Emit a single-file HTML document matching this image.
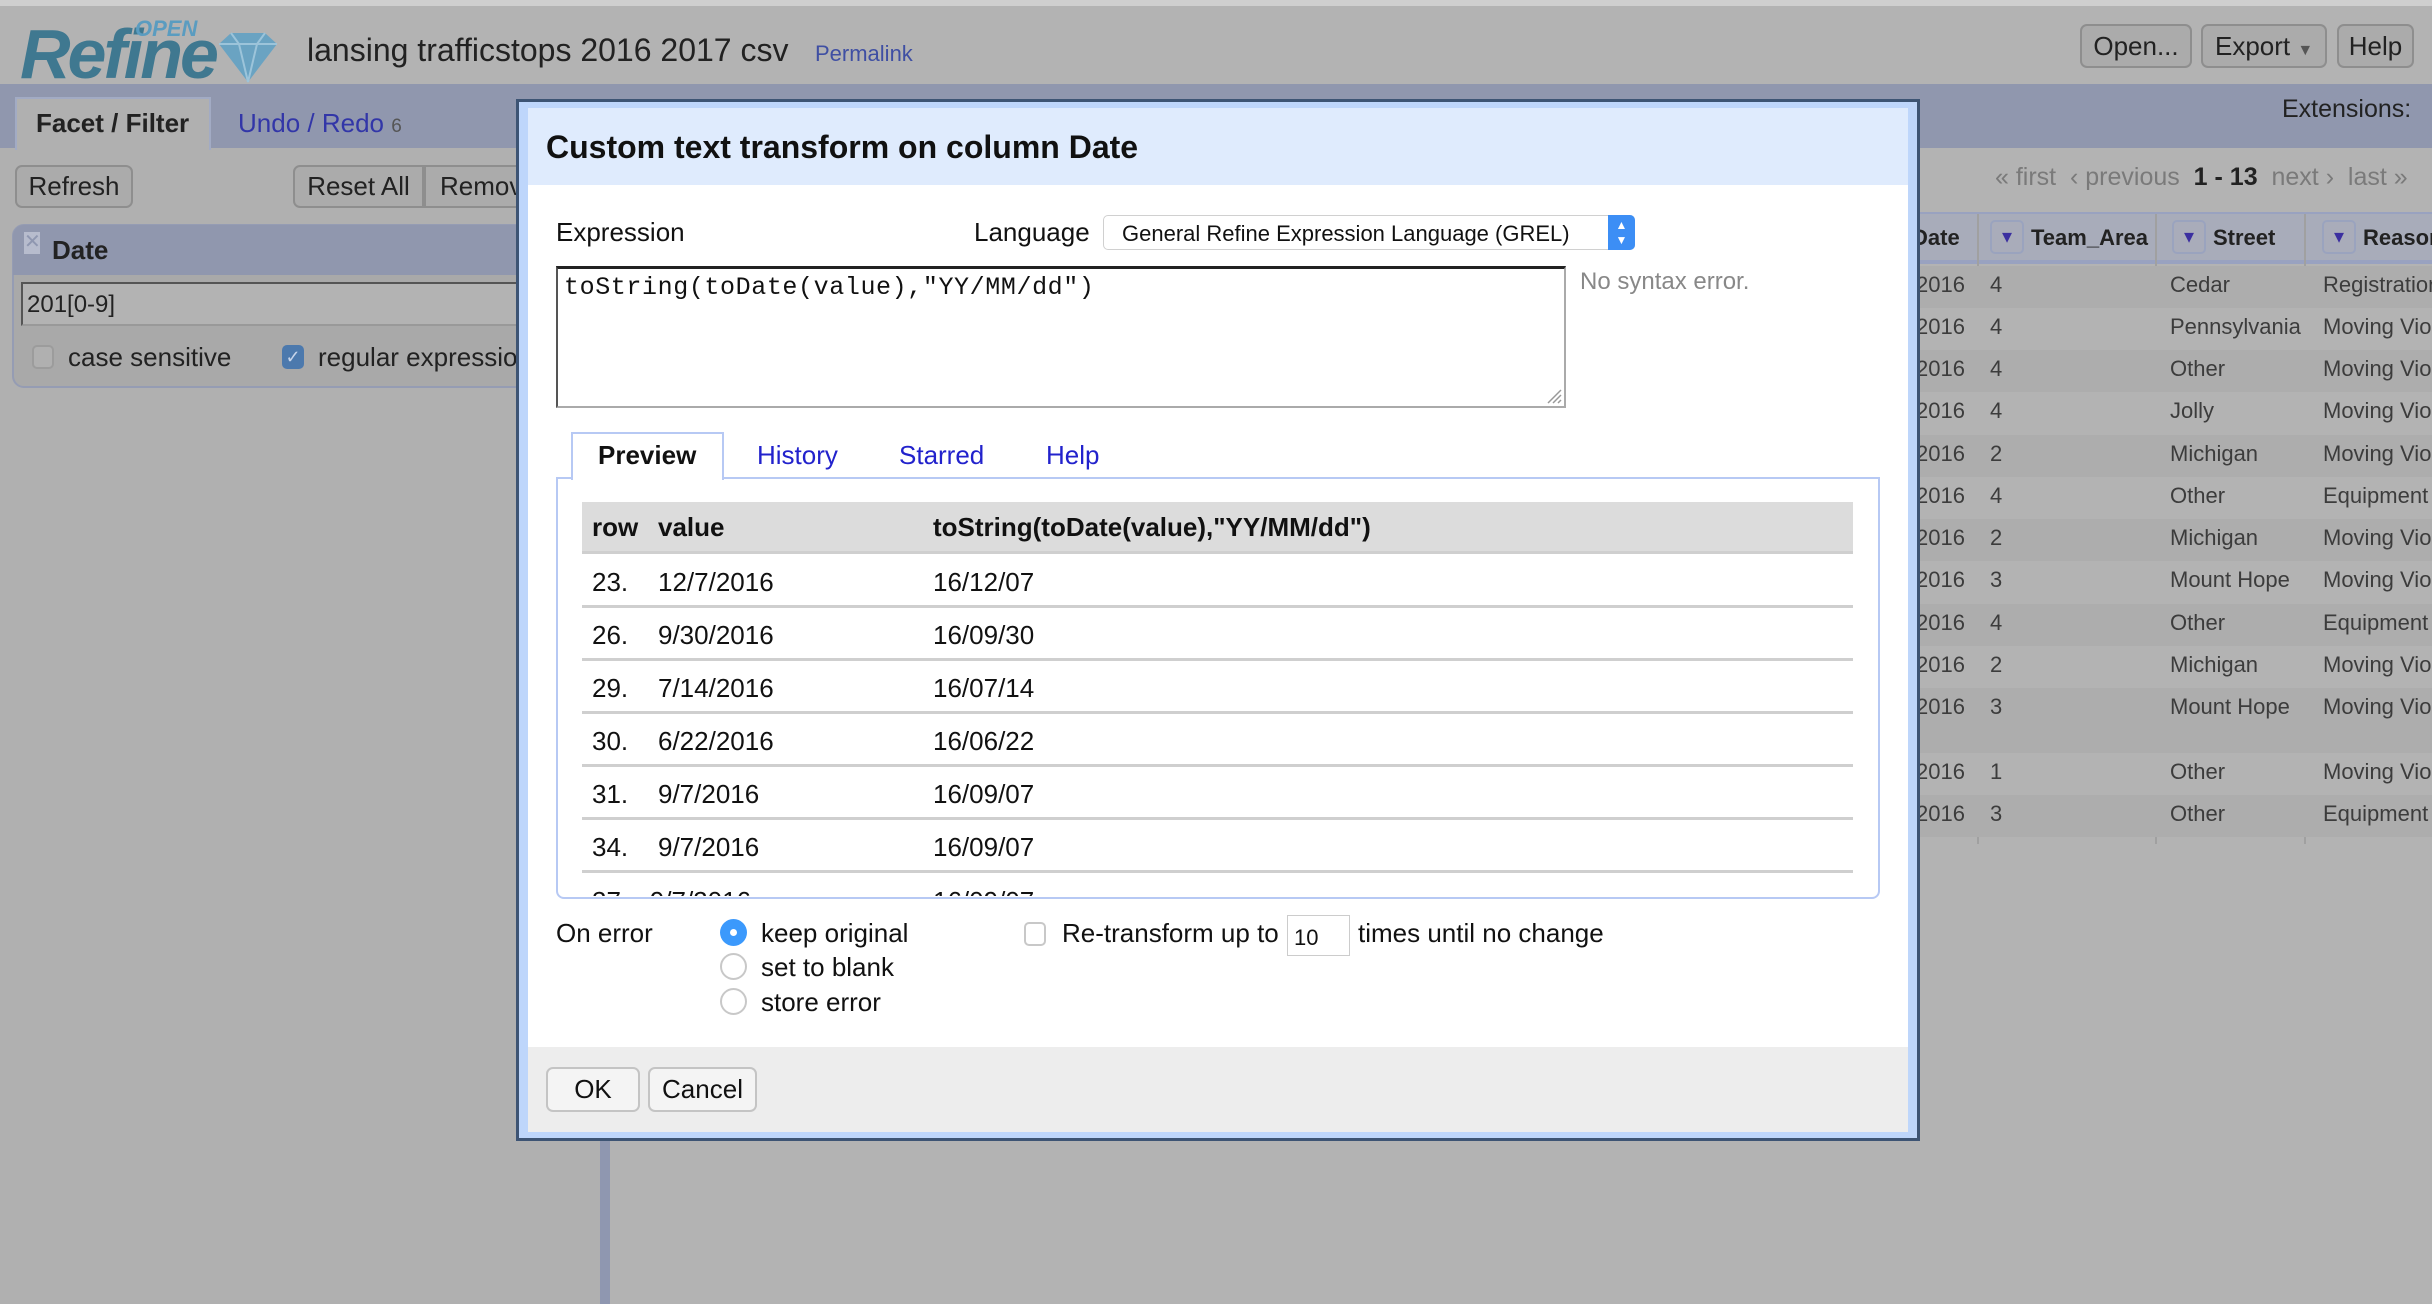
<!DOCTYPE html>
<html><head><meta charset="utf-8"><style>
*{box-sizing:border-box;margin:0;padding:0}
body{width:2432px;height:1304px;position:relative;overflow:hidden;background:#b3b3b3;font-family:"Liberation Sans",Arial,sans-serif;color:#222}
.a{position:absolute;white-space:nowrap}
.btn{position:absolute;border:2px solid #8e8e8e;border-radius:7px;background:#ababab;font-size:26px;color:#222;text-align:center}
.g{position:absolute;font-size:22px;color:#3c3c3c;white-space:nowrap}
.dlg .t{position:absolute;white-space:nowrap;font-size:26px;color:#111}
.row{position:absolute;left:582px;width:1271px;height:53px;border-bottom:3px solid #cfcfcf}
.row span{position:absolute;top:12px;font-size:26px;color:#111}
.radio{position:absolute;width:27px;height:27px;border-radius:50%;border:2px solid #c8c8c8;background:#fff}
.dd{position:absolute;top:220px;width:34px;height:34px;border:2px solid #9aa3be;border-radius:5px;background:#a9acba;color:#3b2fa0;font-size:20px;text-align:center;line-height:30px}
</style></head><body>
<div class="a" style="left:0;top:0;width:2432px;height:6px;background:#cfcfcf"></div>
<div class="a" style="left:0;top:84px;width:2432px;height:64px;background:#9097ae"></div>
<div class="a" style="left:20px;top:14px;font-size:70px;font-style:italic;font-weight:bold;color:#3f7890;letter-spacing:-3px">Refine</div>
<div class="a" style="left:135px;top:16px;font-size:22px;font-style:italic;font-weight:bold;color:#5a9cc0">OPEN</div>
<svg class="a" style="left:215px;top:30px" width="66" height="54" viewBox="0 0 66 54"><path d="M4 14 L16 3 L50 3 L62 14 L33 52 Z" fill="#6aa3c2"/><path d="M4 14 L62 14 M16 3 L24 14 L33 52 L42 14 L50 3" stroke="#9cc4da" stroke-width="2" fill="none"/></svg>
<div class="a" style="left:307px;top:32px;font-size:32px;color:#222">lansing trafficstops 2016 2017 csv</div>
<div class="a" style="left:815px;top:41px;font-size:22px;color:#3f4fa3">Permalink</div>
<div class="btn" style="left:2080px;top:24px;width:112px;height:44px;line-height:40px">Open...</div>
<div class="btn" style="left:2201px;top:24px;width:126px;height:44px;line-height:40px;text-align:left;padding-left:12px">Export <span style="font-size:16px;color:#555">▼</span></div>
<div class="btn" style="left:2337px;top:24px;width:77px;height:44px;line-height:40px">Help</div>
<div class="a" style="left:0;top:148px;width:600px;height:1156px;background:#b0b0b0"></div>
<div class="a" style="left:600px;top:148px;width:10px;height:1156px;background:#8f97b0"></div>
<div class="a" style="left:15px;top:97px;width:196px;height:53px;background:#b0b0b0;border:2px solid #a2abc4;border-bottom:none"></div>
<div class="a" style="left:36px;top:108px;font-size:26px;font-weight:bold;color:#222">Facet / Filter</div>
<div class="a" style="left:238px;top:108px;font-size:26px;color:#3236a8">Undo / Redo <span style="font-size:19px;color:#555">6</span></div>
<div class="btn" style="left:15px;top:165px;width:118px;height:43px;line-height:39px">Refresh</div>
<div class="btn" style="left:293px;top:165px;width:131px;height:43px;line-height:39px;border-radius:7px 0 0 7px">Reset All</div>
<div class="btn" style="left:424px;top:165px;width:130px;height:43px;line-height:39px;text-align:left;padding-left:14px;border-radius:0">Remove</div>
<div class="a" style="left:12px;top:224px;width:560px;height:164px;background:#a9a9a9;border:2px solid #959cb3;border-radius:12px"></div>
<div class="a" style="left:13px;top:225px;width:560px;height:50px;background:#9097ae;border-radius:11px 0 0 0"></div>
<div class="a" style="left:24px;top:232px;width:16px;height:22px;background:#b7bccd;color:#8f97b0;font-size:20px;line-height:20px;text-align:center">✕</div>
<div class="a" style="left:52px;top:235px;font-size:26px;font-weight:bold;color:#222">Date</div>
<div class="a" style="left:21px;top:282px;width:560px;height:44px;background:#b3b3b3;border:2px solid #555;border-right:none;border-bottom:2px solid #999;font-size:24px;padding:7px 4px;color:#222">201[0-9]</div>
<div class="a" style="left:32px;top:345px;width:22px;height:24px;border:2px solid #9c9c9c;border-radius:5px;background:#b0b0b0"></div>
<div class="a" style="left:68px;top:342px;font-size:26px;color:#222">case sensitive</div>
<div class="a" style="left:282px;top:345px;width:22px;height:24px;border-radius:5px;background:#4c79ad;color:#c6d4ea;font-size:18px;text-align:center;line-height:24px">✓</div>
<div class="a" style="left:318px;top:342px;font-size:26px;color:#222">regular expression</div>
<div class="a" style="left:2282px;top:95px;font-size:25px;color:#222">Extensions:</div>
<div class="a" style="left:1995px;top:163px;font-size:25px;color:#7a7a7a">« first &nbsp;‹ previous &nbsp;<b style="color:#222">1 - 13</b> &nbsp;next › &nbsp;last »</div>
<div class="a" style="left:1920px;top:212px;width:512px;height:52px;background:#a8acba;border-top:2px solid #99a2c0;border-bottom:4px solid #99a2c0"></div>
<div class="a" style="left:1977px;top:214px;width:2px;height:630px;background:#a0a0a0"></div>
<div class="a" style="left:2155px;top:214px;width:2px;height:630px;background:#a0a0a0"></div>
<div class="a" style="left:2304px;top:214px;width:2px;height:630px;background:#a0a0a0"></div>
<div class="g" style="left:1912px;top:225px;font-weight:bold;color:#222">Date</div>
<div class="dd" style="left:1990px">▾</div>
<div class="g" style="left:2031px;top:225px;font-weight:bold;color:#222">Team_Area</div>
<div class="dd" style="left:2172px">▾</div>
<div class="g" style="left:2213px;top:225px;font-weight:bold;color:#222">Street</div>
<div class="dd" style="left:2322px">▾</div>
<div class="g" style="left:2363px;top:225px;font-weight:bold;color:#222">Reason</div>
<div class="a" style="left:1920px;top:266px;width:512px;height:42px;background:#adadad"></div><div class="g" style="left:1916px;top:272px">2016</div><div class="g" style="left:1990px;top:272px">4</div><div class="g" style="left:2170px;top:272px">Cedar</div><div class="g" style="left:2323px;top:272px">Registration</div>
<div class="a" style="left:1920px;top:308px;width:512px;height:42px;background:#b3b3b3"></div><div class="g" style="left:1916px;top:314px">2016</div><div class="g" style="left:1990px;top:314px">4</div><div class="g" style="left:2170px;top:314px">Pennsylvania</div><div class="g" style="left:2323px;top:314px">Moving Violation</div>
<div class="a" style="left:1920px;top:350px;width:512px;height:42px;background:#adadad"></div><div class="g" style="left:1916px;top:356px">2016</div><div class="g" style="left:1990px;top:356px">4</div><div class="g" style="left:2170px;top:356px">Other</div><div class="g" style="left:2323px;top:356px">Moving Violation</div>
<div class="a" style="left:1920px;top:392px;width:512px;height:43px;background:#b3b3b3"></div><div class="g" style="left:1916px;top:398px">2016</div><div class="g" style="left:1990px;top:398px">4</div><div class="g" style="left:2170px;top:398px">Jolly</div><div class="g" style="left:2323px;top:398px">Moving Violation</div>
<div class="a" style="left:1920px;top:435px;width:512px;height:42px;background:#adadad"></div><div class="g" style="left:1916px;top:441px">2016</div><div class="g" style="left:1990px;top:441px">2</div><div class="g" style="left:2170px;top:441px">Michigan</div><div class="g" style="left:2323px;top:441px">Moving Violation</div>
<div class="a" style="left:1920px;top:477px;width:512px;height:42px;background:#b3b3b3"></div><div class="g" style="left:1916px;top:483px">2016</div><div class="g" style="left:1990px;top:483px">4</div><div class="g" style="left:2170px;top:483px">Other</div><div class="g" style="left:2323px;top:483px">Equipment</div>
<div class="a" style="left:1920px;top:519px;width:512px;height:42px;background:#adadad"></div><div class="g" style="left:1916px;top:525px">2016</div><div class="g" style="left:1990px;top:525px">2</div><div class="g" style="left:2170px;top:525px">Michigan</div><div class="g" style="left:2323px;top:525px">Moving Violation</div>
<div class="a" style="left:1920px;top:561px;width:512px;height:43px;background:#b3b3b3"></div><div class="g" style="left:1916px;top:567px">2016</div><div class="g" style="left:1990px;top:567px">3</div><div class="g" style="left:2170px;top:567px">Mount Hope</div><div class="g" style="left:2323px;top:567px">Moving Violation</div>
<div class="a" style="left:1920px;top:604px;width:512px;height:42px;background:#adadad"></div><div class="g" style="left:1916px;top:610px">2016</div><div class="g" style="left:1990px;top:610px">4</div><div class="g" style="left:2170px;top:610px">Other</div><div class="g" style="left:2323px;top:610px">Equipment</div>
<div class="a" style="left:1920px;top:646px;width:512px;height:42px;background:#b3b3b3"></div><div class="g" style="left:1916px;top:652px">2016</div><div class="g" style="left:1990px;top:652px">2</div><div class="g" style="left:2170px;top:652px">Michigan</div><div class="g" style="left:2323px;top:652px">Moving Violation</div>
<div class="a" style="left:1920px;top:688px;width:512px;height:65px;background:#adadad"></div><div class="g" style="left:1916px;top:694px">2016</div><div class="g" style="left:1990px;top:694px">3</div><div class="g" style="left:2170px;top:694px">Mount Hope</div><div class="g" style="left:2323px;top:694px">Moving Violation</div>
<div class="a" style="left:1920px;top:753px;width:512px;height:42px;background:#b3b3b3"></div><div class="g" style="left:1916px;top:759px">2016</div><div class="g" style="left:1990px;top:759px">1</div><div class="g" style="left:2170px;top:759px">Other</div><div class="g" style="left:2323px;top:759px">Moving Violation</div>
<div class="a" style="left:1920px;top:795px;width:512px;height:42px;background:#adadad"></div><div class="g" style="left:1916px;top:801px">2016</div><div class="g" style="left:1990px;top:801px">3</div><div class="g" style="left:2170px;top:801px">Other</div><div class="g" style="left:2323px;top:801px">Equipment</div>
<div class="dlg">
<div class="a" style="left:516px;top:99px;width:1404px;height:1042px;background:#bed6fb;border:3px solid #3d5474"></div>
<div class="a" style="left:528px;top:108px;width:1380px;height:1024px;background:#fff"></div>
<div class="a" style="left:528px;top:108px;width:1380px;height:77px;background:#dfebfd"></div>
<div class="a" style="left:546px;top:129px;font-size:32px;font-weight:bold;color:#111">Custom text transform on column Date</div>
<div class="t" style="left:556px;top:217px">Expression</div>
<div class="t" style="left:974px;top:217px">Language</div>
<div class="a" style="left:1103px;top:215px;width:532px;height:35px;border:1px solid #d0d0d0;border-radius:5px;background:#fff;font-size:22px;padding:5px 0 0 18px;color:#111">General Refine Expression Language (GREL)</div>
<div class="a" style="left:1608px;top:215px;width:27px;height:35px;background:#3c8ef5;border-radius:0 5px 5px 0;color:#fff;font-size:12px;text-align:center;line-height:15px;padding-top:3px">▲<br>▼</div>
<div class="a" style="left:556px;top:266px;width:1010px;height:142px;border:2px solid #aaa;border-top:3px solid #222;border-left:2px solid #555;font-family:'Liberation Mono',monospace;font-size:25px;letter-spacing:0.6px;padding:4px 6px;color:#111">toString(toDate(value),"YY/MM/dd")</div>
<svg class="a" style="left:1546px;top:388px" width="16" height="16"><path d="M2 15 L15 2 M7 15 L15 7 M12 15 L15 12" stroke="#999" stroke-width="1.5"/></svg>
<div class="a" style="left:1580px;top:268px;font-size:24px;color:#888">No syntax error.</div>
<div class="a" style="left:556px;top:477px;width:1324px;height:422px;border:2px solid #b7c9f4;border-radius:0 0 8px 8px"></div>
<div class="a" style="left:571px;top:432px;width:153px;height:48px;border:2px solid #b7c9f4;border-bottom:none;background:#fff"></div>
<div class="t" style="left:598px;top:440px;font-weight:bold">Preview</div>
<div class="t" style="left:757px;top:440px;color:#2222cc">History</div>
<div class="t" style="left:899px;top:440px;color:#2222cc">Starred</div>
<div class="t" style="left:1046px;top:440px;color:#2222cc">Help</div>
<div class="a" style="left:582px;top:502px;width:1271px;height:52px;background:#dcdcdc;border-bottom:3px solid #cfcfcf"></div>
<div class="t" style="left:592px;top:512px;font-weight:bold">row</div>
<div class="t" style="left:658px;top:512px;font-weight:bold">value</div>
<div class="t" style="left:933px;top:512px;font-weight:bold">toString(toDate(value),"YY/MM/dd")</div>
<div class="row" style="top:555px"><span style="left:10px">23.</span><span style="left:76px">12/7/2016</span><span style="left:351px">16/12/07</span></div>
<div class="row" style="top:608px"><span style="left:10px">26.</span><span style="left:76px">9/30/2016</span><span style="left:351px">16/09/30</span></div>
<div class="row" style="top:661px"><span style="left:10px">29.</span><span style="left:76px">7/14/2016</span><span style="left:351px">16/07/14</span></div>
<div class="row" style="top:714px"><span style="left:10px">30.</span><span style="left:76px">6/22/2016</span><span style="left:351px">16/06/22</span></div>
<div class="row" style="top:767px"><span style="left:10px">31.</span><span style="left:76px">9/7/2016</span><span style="left:351px">16/09/07</span></div>
<div class="row" style="top:820px"><span style="left:10px">34.</span><span style="left:76px">9/7/2016</span><span style="left:351px">16/09/07</span></div>
<div class="a" style="left:582px;top:874px;width:1271px;height:22px;overflow:hidden"><div class="a" style="left:10px;top:12px;font-size:26px;color:#111">37. &nbsp;&nbsp;9/7/2016</div><div class="a" style="left:351px;top:12px;font-size:26px;color:#111">16/09/07</div></div>
<div class="t" style="left:556px;top:918px">On error</div>
<div class="radio" style="left:720px;top:919px;border:none;background:#3b99fc"><div style="position:absolute;left:10px;top:10px;width:7px;height:7px;border-radius:50%;background:#fff"></div></div>
<div class="t" style="left:761px;top:918px">keep original</div>
<div class="radio" style="left:720px;top:953px"></div>
<div class="t" style="left:761px;top:952px">set to blank</div>
<div class="radio" style="left:720px;top:988px"></div>
<div class="t" style="left:761px;top:987px">store error</div>
<div class="a" style="left:1024px;top:922px;width:22px;height:24px;border:2px solid #c8c8c8;border-radius:5px"></div>
<div class="t" style="left:1062px;top:918px">Re-transform up to</div>
<div class="a" style="left:1287px;top:915px;width:63px;height:41px;border:1px solid #ccc;font-size:22px;padding:9px 0 0 6px;color:#111">10</div>
<div class="t" style="left:1358px;top:918px">times until no change</div>
<div class="a" style="left:528px;top:1047px;width:1380px;height:85px;background:#ededed"></div>
<div class="btn" style="left:546px;top:1067px;width:94px;height:45px;line-height:41px;background:#f4f4f4;border-color:#c4c4c4;color:#111">OK</div>
<div class="btn" style="left:648px;top:1067px;width:109px;height:45px;line-height:41px;background:#f4f4f4;border-color:#c4c4c4;color:#111">Cancel</div>
</div>
</body></html>
